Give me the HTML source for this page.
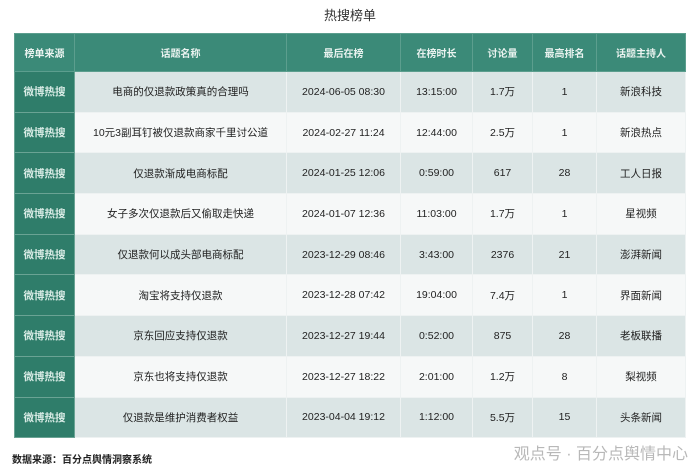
<!DOCTYPE html>
<html><head><meta charset="utf-8"><style>
body{margin:0;width:700px;height:470px;background:#fff;overflow:hidden;font-family:"Liberation Sans","Noto Sans CJK SC",sans-serif;}
.title{position:absolute;top:5px;left:0;width:700px;text-align:center;font-size:13px;color:#333;}
table{position:absolute;left:14px;top:33px;width:671px;border-collapse:collapse;table-layout:fixed;}
td,th{text-align:center;font-size:10.5px;color:#222;border:1.5px solid #eef2f2;padding:0;}
th{background:#3b8a78;color:#eaf3f0;height:37px;font-weight:bold;font-size:10px;border-color:#5c9e8e;}
td{height:39.7px;}
td.s{background:#2f7d6a;color:#d8ebe5;font-weight:bold;border-color:#6aa394;}
tr.a td{background:#dbe5e5;}
tr.b td{background:#f6f8f8;}
tr.a td.s,tr.b td.s{background:#2f7d6a;}
.foot{position:absolute;left:12px;top:451px;font-size:10px;font-weight:bold;color:#222;}
.wm{position:absolute;right:12px;top:440px;font-size:16px;color:#b8b8b8;}
</style></head><body>
<div class="title">热搜榜单</div>
<table>
<colgroup><col style="width:60px"><col style="width:212px"><col style="width:114px"><col style="width:72px"><col style="width:60px"><col style="width:64px"><col style="width:89px"></colgroup>
<tr><th>榜单来源</th><th>话题名称</th><th>最后在榜</th><th>在榜时长</th><th>讨论量</th><th>最高排名</th><th>话题主持人</th></tr>
<tr class="a"><td class="s">微博热搜</td><td>电商的仅退款政策真的合理吗</td><td>2024-06-05 08:30</td><td>13:15:00</td><td>1.7万</td><td>1</td><td>新浪科技</td></tr>
<tr class="b"><td class="s">微博热搜</td><td>10元3副耳钉被仅退款商家千里讨公道</td><td>2024-02-27 11:24</td><td>12:44:00</td><td>2.5万</td><td>1</td><td>新浪热点</td></tr>
<tr class="a"><td class="s">微博热搜</td><td>仅退款渐成电商标配</td><td>2024-01-25 12:06</td><td>0:59:00</td><td>617</td><td>28</td><td>工人日报</td></tr>
<tr class="b"><td class="s">微博热搜</td><td>女子多次仅退款后又偷取走快递</td><td>2024-01-07 12:36</td><td>11:03:00</td><td>1.7万</td><td>1</td><td>星视频</td></tr>
<tr class="a"><td class="s">微博热搜</td><td>仅退款何以成头部电商标配</td><td>2023-12-29 08:46</td><td>3:43:00</td><td>2376</td><td>21</td><td>澎湃新闻</td></tr>
<tr class="b"><td class="s">微博热搜</td><td>淘宝将支持仅退款</td><td>2023-12-28 07:42</td><td>19:04:00</td><td>7.4万</td><td>1</td><td>界面新闻</td></tr>
<tr class="a"><td class="s">微博热搜</td><td>京东回应支持仅退款</td><td>2023-12-27 19:44</td><td>0:52:00</td><td>875</td><td>28</td><td>老板联播</td></tr>
<tr class="b"><td class="s">微博热搜</td><td>京东也将支持仅退款</td><td>2023-12-27 18:22</td><td>2:01:00</td><td>1.2万</td><td>8</td><td>梨视频</td></tr>
<tr class="a"><td class="s">微博热搜</td><td>仅退款是维护消费者权益</td><td>2023-04-04 19:12</td><td>1:12:00</td><td>5.5万</td><td>15</td><td>头条新闻</td></tr>
</table>
<div class="foot">数据来源：百分点舆情洞察系统</div>
<div class="wm">观点号 · 百分点舆情中心</div>
</body></html>
